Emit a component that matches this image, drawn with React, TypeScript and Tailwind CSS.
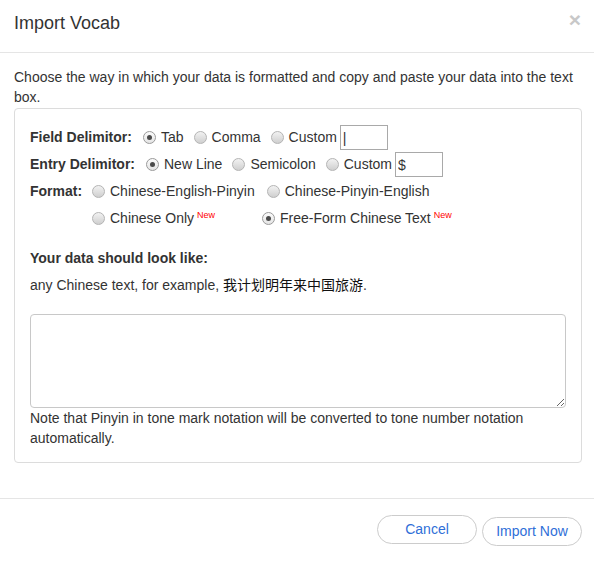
import React from "react";

function Radio({ checked }: { checked?: boolean }) {
  return (
    <span
      className={
        "inline-flex h-[13px] w-[13px] shrink-0 items-center justify-center rounded-full border " +
        (checked
          ? "border-[#9a9a9a] bg-[linear-gradient(#fbfbfb,#e4e4e4)]"
          : "border-[#b4b4b4] bg-[linear-gradient(#f2f2f2,#cfcfcf)]")
      }
    >
      {checked && <span className="h-[5px] w-[5px] rounded-full bg-[#4a4a4a]" />}
    </span>
  );
}

function Option({
  label,
  checked,
  isNew,
  className = "",
}: {
  label: string;
  checked?: boolean;
  isNew?: boolean;
  className?: string;
}) {
  return (
    <label className={"flex items-center " + className}>
      <Radio checked={checked} />
      <span className="ml-[5px]">{label}</span>
      {isNew && (
        <span className="ml-[3px] self-start mt-[3px] text-[9px] leading-none text-[#ff0000]">New</span>
      )}
    </label>
  );
}

export default function App() {
  return (
    <div className="min-h-screen w-full bg-white text-[14px] text-[#333] font-['Liberation_Sans',Arial,sans-serif]">
      {/* header */}
      <div className="flex items-start justify-between border-b border-[#e5e5e5] pl-[14px] pr-[13px] pt-[10px] pb-[16px]">
        <h4 className="text-[18px] leading-[26px]">Import Vocab</h4>
        <button className="mt-[-3px] text-[21px] font-bold leading-[26px] text-[#c8c8c8]">×</button>
      </div>

      {/* body */}
      <div className="pl-[14px] pr-[12px] pt-[14px] pb-[15px]">
        <p className="leading-[20px]">
          Choose the way in which your data is formatted and copy and paste your data into the text box.
        </p>
        <div className="mt-px mb-[20px] rounded-[4px] border border-[#dcdcdc] px-[15px] pt-[15px] pb-[14px]">
          <div className="flex h-[27px] items-center">
            <b className="w-[113px]">Field Delimitor:</b>
            <Option label="Tab" checked />
            <Option label="Comma" className="ml-[10px]" />
            <Option label="Custom" className="ml-[10px]" />
            <input
              defaultValue="|"
              className="ml-[3px] h-[25px] w-[48px] border border-[#a9a9a9] px-[2px] text-[14px] outline-none"
            />
          </div>
          <div className="flex h-[27px] items-center">
            <b className="w-[116px]">Entry Delimitor:</b>
            <Option label="New Line" checked />
            <Option label="Semicolon" className="ml-[10px]" />
            <Option label="Custom" className="ml-[10px]" />
            <input
              defaultValue="$"
              className="ml-[3px] h-[25px] w-[48px] border border-[#a9a9a9] px-[2px] text-[14px] outline-none"
            />
          </div>
          <div className="flex h-[27px] items-center">
            <b className="w-[62px]">Format:</b>
            <Option label="Chinese-English-Pinyin" />
            <Option label="Chinese-Pinyin-English" className="ml-[12px]" />
          </div>
          <div className="flex h-[27px] items-center pl-[62px]">
            <Option label="Chinese Only" isNew />
            <Option label="Free-Form Chinese Text" checked isNew className="ml-[47px]" />
          </div>

          <p className="mt-[16px] font-bold leading-[20px]">Your data should look like:</p>
          <p className="mt-[6px] leading-[20px]">
            any Chinese text, for example,{" "}
            <span className="font-['Noto_Sans_CJK_SC',sans-serif] text-[#111]">我计划明年来中国旅游</span>.
          </p>

          <textarea className="mt-[19px] block h-[94px] w-full rounded-[4px] border border-[#c8c8c8] p-[6px] outline-none" />
          <p className="leading-[20px]">
            Note that Pinyin in tone mark notation will be converted to tone number notation automatically.
          </p>
        </div>
      </div>

      {/* footer */}
      <div className="flex items-start justify-end gap-[5px] border-t border-[#e5e5e5] pr-[12px] pt-[16px] pb-[15px]">
        <button className="h-[29px] w-[100px] rounded-full border border-[#cccccc] bg-white text-[14px] text-[#2f6fd8]">
          Cancel
        </button>
        <button className="mt-[2px] h-[29px] w-[100px] rounded-full border border-[#cccccc] bg-white text-[14px] text-[#2f6fd8]">
          Import Now
        </button>
      </div>
    </div>
  );
}
